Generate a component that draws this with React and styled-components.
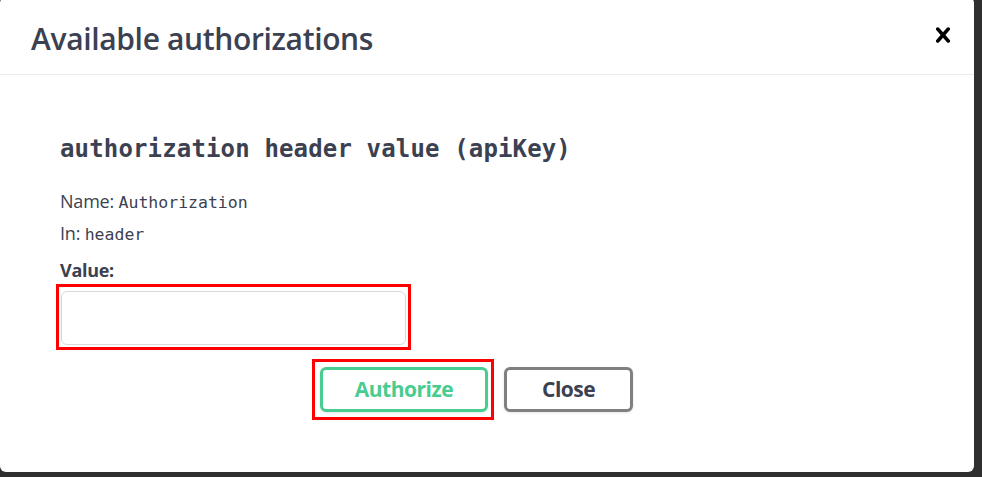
import React from "react";
import styled, { createGlobalStyle } from "styled-components";

const Global = createGlobalStyle`
  html, body { margin: 0; padding: 0; background: #2f2f2f; overflow: hidden; }
  body { width: 982px; height: 477px; }
  * { box-sizing: border-box; }
`;

const Modal = styled.div`
  width: 974px;
  height: 475px;
  margin-top: -3px;
  background: #fff;
  border-radius: 6px;
  display: flex;
  flex-direction: column;
  color: #3b4151;
`;

const Header = styled.div`
  height: 78px;
  flex: none;
  display: flex;
  align-items: center;
  border-bottom: 1px solid #ebebeb;
`;

const Title = styled.h3`
  flex: 1;
  margin: 7px 0 0 0;
  padding: 0 31px;
  font-family: "Open Sans", "Noto Sans", sans-serif;
  font-size: 30px;
  font-weight: 600;
  line-height: 40px;
  letter-spacing: -0.35px;
  color: #3b4151;
`;

const CloseX = styled.button`
  appearance: none;
  background: none;
  border: none;
  padding: 0 16px 0 15px;
  margin: 0 0 1px 0;
  display: flex;
  align-items: center;
  cursor: pointer;
  svg { width: 30px; height: 30px; display: block; }
`;

const Content = styled.div`
  padding: 30px;
  flex: 1;
`;

const AuthContainer = styled.div`
  padding: 15px 30px;
`;

const AuthTitle = styled.h4`
  margin: 15px 0 22px;
  font-family: "DejaVu Sans Mono", "Liberation Mono", monospace;
  font-size: 24px;
  font-weight: 700;
  line-height: 28px;
  letter-spacing: 0.15px;
  color: #3b4151;
`;

const Info = styled.p`
  margin: 0;
  font-family: "Open Sans", "Noto Sans", sans-serif;
  font-size: 18px;
  line-height: 32px;
  color: #3b4151;
  letter-spacing: -0.2px;
`;

const Code = styled.code`
  font-family: "DejaVu Sans Mono", "Liberation Mono", monospace;
  font-size: 16.5px;
  line-height: 1;
  letter-spacing: 0;
`;

const Label = styled.label`
  display: block;
  margin-top: 8px;
  font-family: "Open Sans", "Noto Sans", sans-serif;
  font-size: 18px;
  font-weight: 700;
  line-height: 27px;
  letter-spacing: -0.3px;
  color: #3b4151;
`;

const Highlight = styled.div`
  display: inline-flex;
  border: 3px solid #ff0000;
  padding: ${(p) => p.$pad};
  margin-left: ${(p) => p.$ml || "0"};
`;

const Input = styled.input`
  width: 345px;
  height: 54px;
  border: 1px solid #d9d9d9;
  border-radius: 6px;
  padding: 12px 15px;
  background: #fff;
  font-size: 18px;
  outline: none;
`;

const Row = styled.div`
  display: flex;
  justify-content: center;
  align-items: center;
  margin-top: 9px;
  gap: 10px;
`;

const Btn = styled.button`
  height: 45px;
  padding: 0 ${(p) => p.$px};
  background: transparent;
  border: 3px solid ${(p) => p.$color};
  color: ${(p) => p.$text};
  border-radius: 6px;
  box-shadow: 0 1px 3px rgba(0, 0, 0, 0.1);
  font-family: "Open Sans", "Noto Sans", sans-serif;
  font-size: 21px;
  font-weight: 700;
  letter-spacing: -0.5px;
  line-height: 1;
  margin-right: ${(p) => p.$mr || "0"};
  cursor: pointer;
`;

export default function App() {
  return (
    <>
      <Global />
      <Modal>
        <Header>
          <Title>Available authorizations</Title>
          <CloseX aria-label="close">
            <svg viewBox="0 0 20 20" aria-hidden="true">
              <path
                fill="#000"
                d="M14.348 14.849c-.469.469-1.229.469-1.697 0L10 11.819l-2.651 3.029c-.469.469-1.229.469-1.697 0-.469-.469-.469-1.229 0-1.697l2.758-3.15-2.759-3.152c-.469-.469-.469-1.228 0-1.697.469-.469 1.228-.469 1.697 0L10 8.183l2.651-3.031c.469-.469 1.228-.469 1.697 0 .469.469.469 1.229 0 1.697l-2.758 3.152 2.758 3.15c.469.469.469 1.229 0 1.698z"
              />
            </svg>
          </CloseX>
        </Header>
        <Content>
          <AuthContainer>
            <AuthTitle>authorization header value (apiKey)</AuthTitle>
            <Info>
              Name: <Code>Authorization</Code>
            </Info>
            <Info>
              In: <Code>header</Code>
            </Info>
            <Label>Value:</Label>
            <Highlight $pad="4px 2px 2px 2px" $ml="-4px">
              <Input type="text" />
            </Highlight>
            <Row>
              <Highlight $pad="5px 3px 5px 5px">
                <Btn $px="32px" $color="#49cc90" $text="#49cc90">
                  Authorize
                </Btn>
              </Highlight>
              <Btn $px="35px" $color="#808080" $text="#3b4151" $mr="29px">
                Close
              </Btn>
            </Row>
          </AuthContainer>
        </Content>
      </Modal>
    </>
  );
}
